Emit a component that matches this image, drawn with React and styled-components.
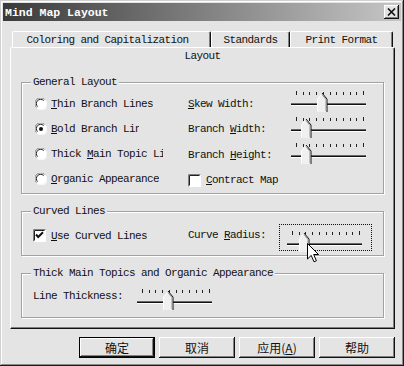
import React from 'react'
import styled, { createGlobalStyle } from 'styled-components'

const BG = '#e4e4e4'
const MONO = `'Liberation Mono', 'DejaVu Sans Mono', monospace`
const CJK = `'Noto Sans CJK SC', 'Noto Sans', sans-serif`

const Global = createGlobalStyle`
  html, body { margin: 0; padding: 0; background: #fff; }
  body {
    font-family: ${MONO};
    font-size: 11px;
    letter-spacing: -0.6px;
    color: #111;
  }
`

const Window = styled.div`
  width: 404px;
  height: 366px;
  box-sizing: border-box;
  padding: 3px;
  background: ${BG};
  box-shadow: inset -1px -1px #1a1a1a, inset 1px 1px #d0d0d0,
    inset -2px -2px #8a8a8a, inset 2px 2px #fff;
  display: flex;
  flex-direction: column;
`

const TitleBar = styled.div`
  height: 18px;
  padding: 0 2px;
  display: flex;
  align-items: center;
  justify-content: space-between;
  background: linear-gradient(to right, #3a3a3a, #c6c6c6);
`

const Title = styled.span`
  color: #fff;
  font-weight: bold;
  font-size: 11.5px;
  letter-spacing: 0;
`

const CloseBtn = styled.div`
  width: 15px;
  height: 14px;
  box-sizing: border-box;
  background: ${BG};
  box-shadow: inset -1px -1px #111, inset 1px 1px #fff, inset -2px -2px #808080;
  display: flex;
  align-items: center;
  justify-content: center;
`

const TabArea = styled.div`
  margin: 10px 6px 0 7px;
  display: flex;
  flex-direction: column;
`

const BackRow = styled.div`
  display: flex;
  padding: 0 2px;
  height: 16px;
`

const Tab = styled.div`
  width: ${p => p.$w}px;
  height: 16px;
  box-sizing: border-box;
  border-top: 1px solid #fff;
  border-left: 1px solid #fff;
  border-right: 1px solid #111;
  box-shadow: inset -1px 0 #808080;
  border-radius: 2px 2px 0 0;
  display: flex;
  align-items: center;
  justify-content: center;
  padding-right: ${p => p.$shift || 0}px;
`

const FrontTab = styled(Tab)`
  width: auto;
  height: 16px;
  padding-top: 1px;
`

const Panel = styled.div`
  height: 266px;
  box-sizing: border-box;
  border-left: 1px solid #fff;
  border-right: 1px solid #111;
  border-bottom: 1px solid #111;
  box-shadow: inset -1px -1px #808080;
  padding: 13px 10px 0 10px;
`

const Group = styled.fieldset`
  margin: ${p => p.$mt || 0}px 0 0;
  padding: 0;
  min-width: 0;
  border: 1px solid #a2a2a2;
  box-shadow: inset 1px 1px #fff, 1px 1px #fff;
`

const Legend = styled.legend`
  margin-left: 9px;
  padding: 0 2px;
  line-height: 12px;
  background: ${BG};
`

const GeneralBody = styled.div`
  display: flex;
  padding: 3px 0 2px 13px;
`

const Column = styled.div`
  width: ${p => p.$w ? `${p.$w}px` : 'auto'};
  display: flex;
  flex-direction: column;
`

const Row = styled.div`
  height: ${p => p.$h || 25}px;
  display: flex;
  align-items: ${p => p.$top ? 'flex-start' : 'center'};
`

const Option = styled.label`
  display: flex;
  align-items: center;
  gap: ${p => p.$gap || 4}px;
  line-height: 12px;
  margin-top: ${p => p.$mt || 0}px;
  width: ${p => p.$w ? `${p.$w}px` : 'auto'};
`

const OptionText = styled.span`
  white-space: nowrap;
  overflow: hidden;
  max-width: ${p => p.$clip ? `${p.$clip}px` : 'none'};
`

const FieldLabel = styled.span`
  width: ${p => p.$w}px;
  line-height: 12px;
  white-space: nowrap;
  margin-top: ${p => p.$mt || 0}px;
`

const Key = styled.span`
  text-decoration: underline;
  text-underline-offset: 1px;
`

const CurvedBody = styled.div`
  padding: 7px 0 4px 11px;
`

const FocusBox = styled.div`
  position: relative;
  width: 93px;
  height: 27px;
  box-sizing: border-box;
  border: 1px dotted #111;
  padding: 6px 0 0 6px;
`

const Cursor = styled.svg`
  position: absolute;
  left: 27px;
  top: 18px;
`

const ThickBody = styled.div`
  padding: 10px 0 4px 11px;
`

const ButtonRow = styled.div`
  display: flex;
  justify-content: flex-end;
  gap: 4px;
  margin: 8px 6px 0 0;
`

const Button = styled.button`
  width: 76px;
  height: 21px;
  padding: 0;
  background: ${BG};
  font-family: ${CJK};
  font-size: 12px;
  letter-spacing: 0;
  color: #111;
  box-sizing: border-box;
  border: ${p => p.$default ? '1px solid #000' : 'none'};
  box-shadow: inset -1px -1px #111, inset 1px 1px #fff, inset -2px -2px #808080;
  display: flex;
  align-items: center;
  justify-content: center;
`

const Radio = ({ checked }) => (
  <svg width="12" height="12" viewBox="0 0 12 12">
    <circle cx="6" cy="6" r="5.5" fill="#fff" />
    <path d="M1.5 9.5 A5.5 5.5 0 0 1 9.5 1.5" stroke="#808080" fill="none" />
    <path d="M2.6 8.6 A4.2 4.2 0 0 1 8.6 2.6" stroke="#202020" fill="none" />
    <path d="M10.5 2.5 A5.5 5.5 0 0 1 2.5 10.5" stroke="#fff" fill="none" />
    {checked && <circle cx="6" cy="6" r="2" fill="#111" />}
  </svg>
)

const Check = ({ checked }) => (
  <svg width="13" height="13" viewBox="0 0 13 13">
    <rect x="0" y="0" width="13" height="13" fill="#fff" />
    <path d="M0.5 12.5 V0.5 H12.5" stroke="#808080" fill="none" />
    <path d="M1.5 11.5 V1.5 H11.5" stroke="#202020" fill="none" />
    {checked && (
      <path d="M3 5.5 L5.2 8 L10 3.2" stroke="#111" strokeWidth="2" fill="none" />
    )}
  </svg>
)

const Slider = ({ at }) => {
  const ticks = Array.from({ length: 11 }, (_, i) => Math.round(6 + i * 6.7))
  return (
    <svg width="80" height="24" viewBox="0 0 80 24" style={{ overflow: 'visible' }}>
      {ticks.map((x, i) => (
        <rect key={i} x={x} y={i === 0 || i === 10 ? 0 : 1} width="1"
          height={i === 0 || i === 10 ? 4 : 3} fill="#222" />
      ))}
      <rect x="1" y="12" width="75" height="1" fill="#6a6a6a" />
      <rect x="1" y="13" width="75" height="1" fill="#111" />
      <rect x="1" y="14" width="75" height="1" fill="#fff" />
      <path d={`M${at - 5} 21 V8 L${at} 2 L${at + 5} 8 V21 Z`} fill="#f0f0f0" />
      <path d={`M${at - 4.5} 20.5 V8 L${at} 2.5`} stroke="#fff" fill="none" />
      <path d={`M${at} 2 L${at + 5} 8 V21`} stroke="#111" fill="none" />
      <path d={`M${at} 3.5 L${at + 4} 8.5 V20`} stroke="#909090" fill="none" />
    </svg>
  )
}

export default function App() {
  return (
    <>
      <Global />
      <Window>
        <TitleBar>
          <Title>Mind Map Layout</Title>
          <CloseBtn>
            <svg width="9" height="8" viewBox="0 0 9 8">
              <path d="M1 0.5 L8 7.5 M8 0.5 L1 7.5" stroke="#111" strokeWidth="1.6" />
            </svg>
          </CloseBtn>
        </TitleBar>

        <TabArea>
          <BackRow>
            <Tab $w={199} $shift={8}>Coloring and Capitalization</Tab>
            <Tab $w={79}>Standards</Tab>
            <Tab $w={103}>Print Format</Tab>
          </BackRow>
          <FrontTab>Layout</FrontTab>

          <Panel>
            <Group>
              <Legend>General Layout</Legend>
              <GeneralBody>
                <Column $w={153}>
                  <Row>
                    <Option><Radio /><OptionText><Key>T</Key>hin Branch Lines</OptionText></Option>
                  </Row>
                  <Row>
                    <Option><Radio checked /><OptionText $clip={88}><Key>B</Key>old Branch Lines</OptionText></Option>
                  </Row>
                  <Row>
                    <Option><Radio /><OptionText $clip={112}>Thick <Key>M</Key>ain Topic Lines</OptionText></Option>
                  </Row>
                  <Row>
                    <Option><Radio /><OptionText><Key>O</Key>rganic Appearance</OptionText></Option>
                  </Row>
                </Column>
                <Column>
                  <Row $h={26} $top>
                    <FieldLabel $w={102} $mt={7}><Key>S</Key>kew Width:</FieldLabel>
                    <Slider at={32} />
                  </Row>
                  <Row $h={26} $top>
                    <FieldLabel $w={102} $mt={6}>Branch <Key>W</Key>idth:</FieldLabel>
                    <Slider at={16} />
                  </Row>
                  <Row $h={26} $top>
                    <FieldLabel $w={102} $mt={6}>Branch <Key>H</Key>eight:</FieldLabel>
                    <Slider at={16} />
                  </Row>
                  <Row $h={22}>
                    <Option $gap={5}><Check /><span><Key>C</Key>ontract Map</span></Option>
                  </Row>
                </Column>
              </GeneralBody>
            </Group>

            <Group $mt={11}>
              <Legend>Curved Lines</Legend>
              <CurvedBody>
                <Row $h={27} $top>
                  <Option $gap={5} $mt={5} $w={155}><Check checked /><span><Key>U</Key>se Curved Lines</span></Option>
                  <FieldLabel $w={91} $mt={5}>Curve <Key>R</Key>adius:</FieldLabel>
                  <FocusBox>
                    <Slider at={18} />
                    <Cursor width="13" height="20" viewBox="0 0 13 20">
                      <path d="M0.5 0.5 V16 L4.2 12.4 L7 18.8 L9.4 17.8 L6.7 11.5 H11.5 Z"
                        fill="#fff" stroke="#000" strokeLinejoin="miter" />
                    </Cursor>
                  </FocusBox>
                </Row>
              </CurvedBody>
            </Group>

            <Group $mt={11}>
              <Legend>Thick Main Topics and Organic Appearance</Legend>
              <ThickBody>
                <Row $h={24} $top>
                  <FieldLabel $w={103} $mt={1}>Line Thickness:</FieldLabel>
                  <Slider at={32} />
                </Row>
              </ThickBody>
            </Group>
          </Panel>
        </TabArea>

        <ButtonRow>
          <Button $default>确定</Button>
          <Button>取消</Button>
          <Button>应用(<Key>A</Key>)</Button>
          <Button>帮助</Button>
        </ButtonRow>
      </Window>
    </>
  )
}
